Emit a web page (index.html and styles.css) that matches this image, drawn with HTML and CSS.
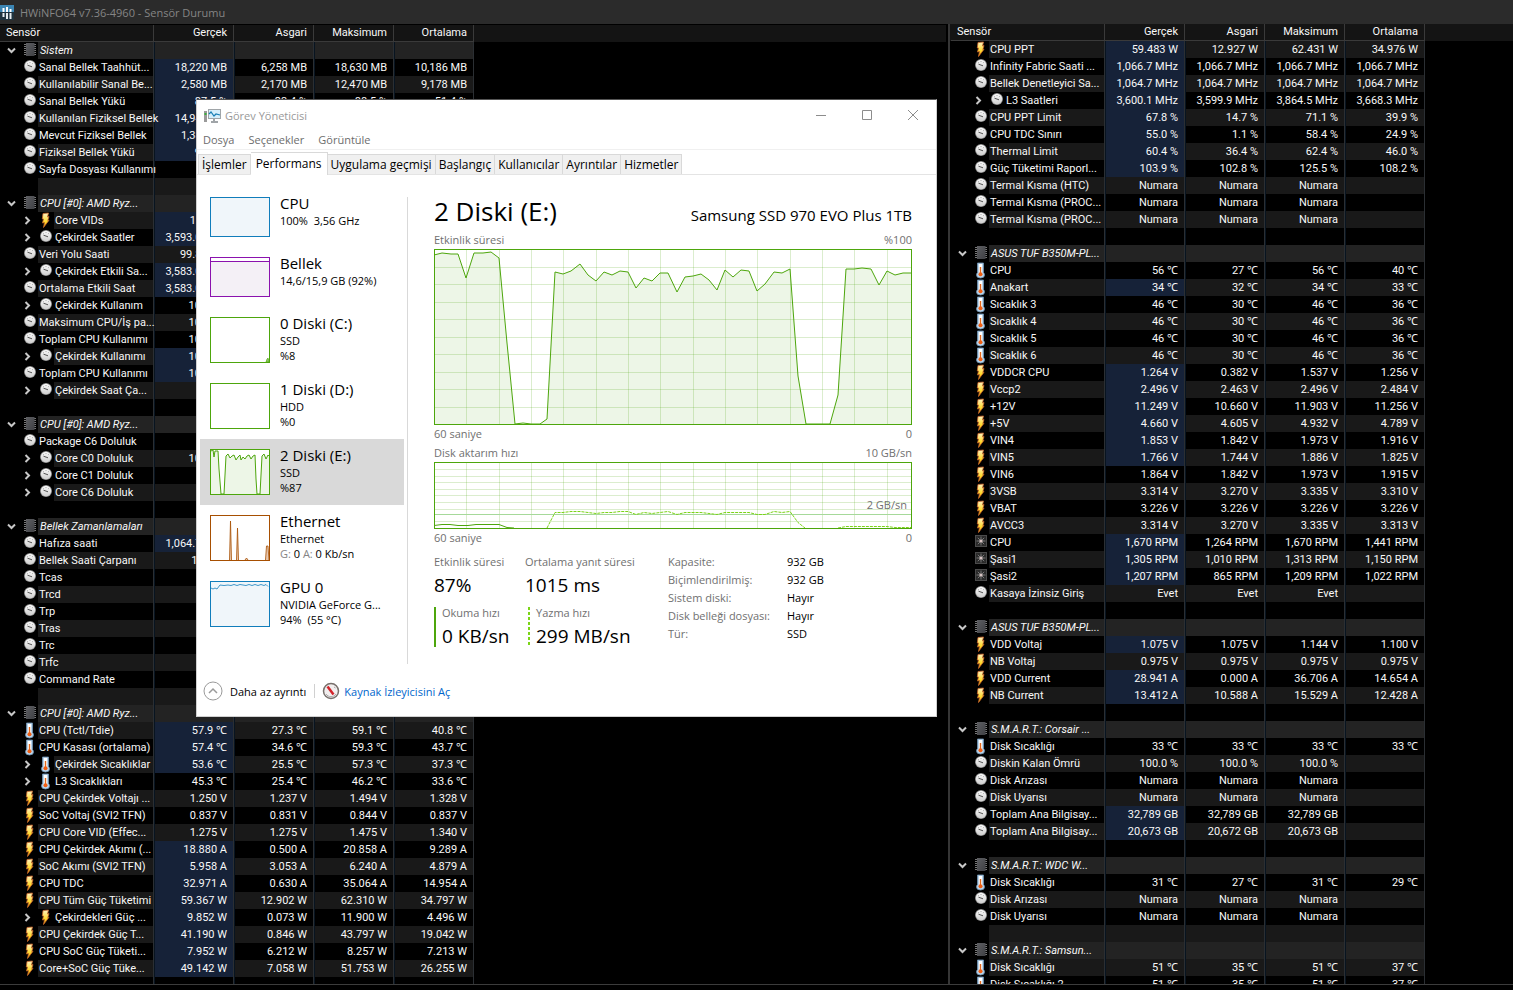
FILE: index.html
```html
<!DOCTYPE html>
<html lang="tr">
<head>
<meta charset="utf-8">
<title>HWiNFO64 v7.36-4960 - Sensör Durumu</title>
<link rel="stylesheet" href="styles.css">
</head>
<body>
<svg class="symbols" aria-hidden="true">
  <linearGradient id="metal" x1="0" y1="0" x2="0" y2="1"><stop offset="0" stop-color="#fafafa"/><stop offset="1" stop-color="#cfcfcf"/></linearGradient>
  <linearGradient id="flame" x1="0" y1="0" x2="0" y2="1"><stop offset="0" stop-color="#fff3c4"/><stop offset=".6" stop-color="#ffd92e"/><stop offset="1" stop-color="#f6a800"/></linearGradient>
  <linearGradient id="case" x1="0" y1="0" x2="1" y2="1"><stop offset="0" stop-color="#5e5f63"/><stop offset="1" stop-color="#3f4044"/></linearGradient>
  <symbol id="gauge" viewBox="0 0 16 17"><circle cx="8" cy="7" r="6" fill="#8b8b8b"/><circle cx="8" cy="7" r="5.200" fill="url(#metal)"/><path d="M5.500 6.200L10 7.800" stroke="#555" stroke-width="1"/><path d="M5 4.200l.8.6M11 4.200l-.8.6M8 3v1" stroke="#aaa"/></symbol>
  <symbol id="chip" viewBox="0 0 16 17"><path d="M2 2.500h12M2 4.500h12M2 6.500h12M2 8.500h12M2 10.500h12M2 12.500h12" stroke="#777"/><rect x="4" y="1" width="8.500" height="13" fill="url(#case)"/></symbol>
  <symbol id="bolt" viewBox="0 0 16 17"><path d="M5 1.500L10.500 1 9.500 5l1.500-.5-1.200 4 1.200-.2L5.500 15.500 6.500 10.500 4.500 11 5.500 7 4.300 7z" fill="url(#flame)" stroke="#c8662a" stroke-width=".8"/></symbol>
  <symbol id="therm" viewBox="0 0 16 17"><path d="M4.500 1h6v9.500q1 1 1 2.500 0 3-4 3t-4-3q0-1.500 1-2.500z" fill="#b9d4ea" stroke="#6f93b3" stroke-width=".8"/><path d="M6 2h3v9H6z" fill="#fff"/><path d="M7.500 5v7" stroke="#e2691c" stroke-width="1.400"/><circle cx="7.500" cy="12.300" r="2" fill="#f05f14"/></symbol>
  <symbol id="fan" viewBox="0 0 16 17"><rect x="2" y="1" width="12" height="12" fill="#4a4a4a"/><rect x="3" y="2" width="10" height="10" fill="#2a2a2a"/><path d="M8 2.500v9M3.500 7h9M4.800 3.800l6.400 6.400M11.200 3.800l-6.400 6.400" stroke="#777"/><circle cx="8" cy="7" r="1.600" fill="#d8c4c4"/></symbol>
</svg>

<div class="desktop">
  <header class="app-bar">
    <svg class="app-logo" viewBox="0 0 14 15"><rect width="14" height="7" fill="#3c86b4"/><rect y="7" width="14" height="8" fill="#20343f"/><path d="M3.500 3v4M7 2v5M10.500 4v3" stroke="#fff" stroke-width="2"/><path d="M3.500 8v4M7 8v6M10.500 8v6" stroke="#e8eef2" stroke-width="2"/></svg>
    <h1 class="app-title">HWiNFO64 v7.36-4960 - Sensör Durumu</h1>
  </header>
  <main class="panes">
    <section class="pane pane-left"><table class="sensors" id="left"></table></section>
    <section class="pane pane-right"><table class="sensors" id="right"></table></section>
  </main>
  <footer class="app-foot"></footer>
</div>

<div class="window" role="dialog" aria-label="Görev Yöneticisi">
  <div class="win-bar">
    <svg class="win-icon" viewBox="0 0 17 15"><path d="M1.500 3v11" stroke="#9a9a9a" stroke-width="3"/><path d="M1.500 5v2" stroke="#3cae3c" stroke-width="2"/><rect x="4.500" y="1.500" width="12" height="9" fill="#d6effb" stroke="#a0a5a8"/><path d="M5 6l2-2 3 4 2-2 4 1" fill="none" stroke="#1a7fb5" stroke-width="1.200"/><path d="M10 11v2M7 14h7" stroke="#a0a5a8" stroke-width="2"/></svg>
    <span class="win-title">Görev Yöneticisi</span>
    <div class="win-buttons">
      <button aria-label="Simge durumuna küçült"><svg viewBox="0 0 12 12"><path d="M1 6.500h10"/></svg></button>
      <button aria-label="Ekranı kapla"><svg viewBox="0 0 12 12"><path d="M1.500 1.500h9v9h-9z"/></svg></button>
      <button aria-label="Kapat"><svg viewBox="0 0 12 12"><path d="M1 1l10 10M11 1L1 11"/></svg></button>
    </div>
  </div>
  <nav class="menu"><button>Dosya</button><button>Seçenekler</button><button>Görüntüle</button></nav>
  <div class="tabs" role="tablist">
    <button role="tab" class="tab">İşlemler</button><button role="tab" class="tab active" aria-selected="true">Performans</button><button role="tab" class="tab">Uygulama geçmişi</button><button role="tab" class="tab">Başlangıç</button><button role="tab" class="tab">Kullanıcılar</button><button role="tab" class="tab">Ayrıntılar</button><button role="tab" class="tab">Hizmetler</button>
  </div>
  <div class="body">
    <aside class="devices">
      <button class="device">
        <svg class="thumb low" viewBox="0 0 60 40"><rect x=".5" y=".5" width="59" height="39" fill="#f0f6fa" stroke="#117dbb"/></svg>
        <span class="info"><span class="name">CPU</span><span>100%&nbsp; 3,56 GHz</span></span>
      </button>
      <button class="device">
        <svg class="thumb low" viewBox="0 0 60 40"><rect x=".5" y=".5" width="59" height="39" fill="#fff" stroke="#8b12ae"/><path d="M1 4.500h58v34.500H1z" fill="#f4f0f6"/><path d="M1 4.500h58" stroke="#8b12ae"/></svg>
        <span class="info"><span class="name">Bellek</span><span>14,6/15,9 GB (92%)</span></span>
      </button>
      <button class="device">
        <svg class="thumb" viewBox="0 0 60 46"><rect x=".5" y=".5" width="59" height="45" fill="#fff" stroke="#4da60c"/><path d="M56 45l1-3 1-1 1 3v1z" fill="#8cc665" stroke="#4da60c" stroke-width=".6"/></svg>
        <span class="info"><span class="name">0 Diski (C:)</span><span>SSD</span><span>%8</span></span>
      </button>
      <button class="device">
        <svg class="thumb" viewBox="0 0 60 46"><rect x=".5" y=".5" width="59" height="45" fill="#fff" stroke="#4da60c"/></svg>
        <span class="info"><span class="name">1 Diski (D:)</span><span>HDD</span><span>%0</span></span>
      </button>
      <button class="device selected">
        <svg class="thumb" viewBox="0 0 60 46"><rect x=".5" y=".5" width="59" height="45" fill="#fff" stroke="#4da60c"/><path d="M1 2L3 1 4 8 5 2 8 2 9 20 11 45H14L16 7 18 5 20 9 22 7 24 6 26 11 28 8 30 6 31 11 33 8 35 10 37 7 39 6 41 10 43 7 45 6 46 30 47 45H50L52 7 54 5 56 10 58 6 59 7V45H1z" fill="#edf6e7"/><path d="M1 2L3 1 4 8 5 2 8 2 9 20 11 45H14L16 7 18 5 20 9 22 7 24 6 26 11 28 8 30 6 31 11 33 8 35 10 37 7 39 6 41 10 43 7 45 6 46 30 47 45H50L52 7 54 5 56 10 58 6 59 7" fill="none" stroke="#4da60c"/></svg>
        <span class="info"><span class="name">2 Diski (E:)</span><span>SSD</span><span>%87</span></span>
      </button>
      <button class="device">
        <svg class="thumb" viewBox="0 0 60 46"><rect x=".5" y=".5" width="59" height="45" fill="#fff" stroke="#a74f01"/><path d="M19.500 45l1-39 1 39M26.500 45l1-32 1 32M35 45l1.500-2 1.500 2M55.500 45l1-14h1.500l1 14" fill="#e8c8b0" stroke="#a74f01" stroke-width=".8"/></svg>
        <span class="info"><span class="name">Ethernet</span><span>Ethernet</span><span><i>G:</i> 0 <i>A:</i> 0 Kb/sn</span></span>
      </button>
      <button class="device">
        <svg class="thumb" viewBox="0 0 60 46"><rect x=".5" y=".5" width="59" height="45" fill="#f0f6fa" stroke="#117dbb"/><path d="M1 7l2 1 2-1 2 1 3-4 4 .5 4-.5 3 .500 3-1 3 1 3-1 3 .500 3 .500 3-1 3 1 3-1 3 1 3-1 3 1 2-1 2 2" fill="none" stroke="#117dbb" stroke-width=".8"/></svg>
        <span class="info"><span class="name">GPU 0</span><span>NVIDIA GeForce G...</span><span>94%&nbsp; (55 °C)</span></span>
      </button>
    </aside>
    <section class="detail">
      <div class="headline"><h2>2 Diski (E:)</h2><span class="model">Samsung SSD 970 EVO Plus 1TB</span></div>
      <div class="caption"><span>Etkinlik süresi</span><span>%100</span></div>
      <svg class="chart" viewBox="0 0 478 176" preserveAspectRatio="none">
        <path class="area" d="M0 176V6L8 4 17 5H24L32 29 40 4H49L57 3 65 9 73 94 81 175 106 175 113 170 121 23 129 25 137 22 146 15 154 26 162 32 170 23 178 26 186 22 194 23 202 39 210 29 218 32 226 24H234L243 43 251 28 259 27 267 25 275 31 283 41 291 21 299 28 307 21 315 22 323 42 331 35 340 23 348 24 356 20 364 127 372 175H396L404 146 412 20H420L428 19 437 20 445 36 453 22 461 26 469 24H478V176z"/>
        <path class="grid" d="M32.500 0v176M65.500 0v176M97.500 0v176M129.500 0v176M162.500 0v176M194.500 0v176M226.500 0v176M259.500 0v176M291.500 0v176M323.500 0v176M356.500 0v176M388.500 0v176M420.500 0v176M453.500 0v176M0 18.500h478M0 35.500h478M0 53.500h478M0 70.500h478M0 88.500h478M0 105.500h478M0 123.500h478M0 140.500h478M0 158.500h478"/>
        <path class="line" d="M0 6L8 4 17 5H24L32 29 40 4H49L57 3 65 9 73 94 81 175 89 174 97 175H106L113 170 121 23 129 25 137 22 146 15 154 26 162 32 170 23 178 26 186 22 194 23 202 39 210 29 218 32 226 24H234L243 43 251 28 259 27 267 25 275 31 283 41 291 21 299 28 307 21 315 22 323 42 331 35 340 23 348 24 356 20 364 127 372 175H396L404 146 412 20H420L428 19 437 20 445 36 453 22 461 26 469 24H478"/>
        <rect class="frame" x=".5" y=".5" width="477" height="175"/>
      </svg>
      <div class="caption under"><span>60 saniye</span><span>0</span></div>
      <div class="caption"><span>Disk aktarım hızı</span><span>10 GB/sn</span></div>
      <div class="rate">
        <svg class="chart" viewBox="0 0 478 67" preserveAspectRatio="none">
          <path class="grid" d="M32.500 0v67M65.500 0v67M97.500 0v67M129.500 0v67M162.500 0v67M194.500 0v67M226.500 0v67M259.500 0v67M291.500 0v67M323.500 0v67M356.500 0v67M388.500 0v67M420.500 0v67M453.500 0v67M0 7.500h478M0 14.500h478M0 20.500h478M0 27.500h478M0 33.500h478M0 40.500h478M0 47.500h478M0 59.500h478"/>
          <path class="limit" d="M0 52.500h478"/>
          <path class="line" d="M0 63.500L8 62.500H16L24 63.500H34L42 62.500H65L73 65.500 80 66"/>
          <path class="line write" d="M113 66L121 50.500H129L137 49.500H146L154 50.500 162 51.500 170 50.500H178L186 49.500H194L202 52.500 210 50.500 218 51.500 226 50.500 234 49.500 243 52.500 251 50.500H267L283 52.500 291 50.500H315L323 52.500H331L340 49.500 348 50.500 356 49.500 364 60.500 371 66M404 66L412 64.500H453L461 65.500H477"/>
          <rect class="frame" x=".5" y=".5" width="477" height="66"/>
        </svg>
        <span class="limit-label">2 GB/sn</span>
      </div>
      <div class="caption under"><span>60 saniye</span><span>0</span></div>
      <div class="stats">
        <div class="figures">
          <div class="figure"><span>Etkinlik süresi</span><b>87%</b></div>
          <div class="figure"><span>Ortalama yanıt süresi</span><b>1015 ms</b></div>
          <div class="figure keyed read"><span>Okuma hızı</span><b>0 KB/sn</b></div>
          <div class="figure keyed written"><svg class="dots" viewBox="0 0 2 40"><path d="M1 0v40"/></svg><span>Yazma hızı</span><b>299 MB/sn</b></div>
        </div>
        <dl class="facts">
          <dt>Kapasite:</dt><dd>932 GB</dd>
          <dt>Biçimlendirilmiş:</dt><dd>932 GB</dd>
          <dt>Sistem diski:</dt><dd>Hayır</dd>
          <dt>Disk belleği dosyası:</dt><dd>Hayır</dd>
          <dt>Tür:</dt><dd>SSD</dd>
        </dl>
      </div>
    </section>
  </div>
  <div class="win-foot">
    <button class="less"><svg viewBox="0 0 20 20"><circle cx="10" cy="10" r="9" fill="none" stroke="#9a9a9a"/><path d="M6 12l4-4 4 4" fill="none" stroke="#9a9a9a" stroke-width="1.500"/></svg>Daha az ayrıntı</button>
    <a class="monitor" href="#"><svg viewBox="0 0 18 18"><circle cx="9" cy="9" r="7.500" fill="#f2eeee" stroke="#77706c" stroke-width="1.500"/><path d="M5.500 4.500l6 8" stroke="#d2232a" stroke-width="2.500"/><path d="M4 12a6 6 0 0 0 10 0M12 5l1.500 1" fill="none" stroke="#aaa"/></svg>Kaynak İzleyicisini Aç</a>
  </div>
</div>
<script src="script.js"></script>
</body>
</html>
```
FILE: styles.css
```css
* { box-sizing: border-box; }
body { margin: 0; background: #000; font-family: "Open Sans", sans-serif; font-size: 11px; overflow: hidden; }
button { font: inherit; color: inherit; background: none; border: 0; padding: 0; text-align: left; }
.symbols { position: absolute; width: 0; height: 0; }

/* sensor application */
.desktop { display: flex; flex-direction: column; height: 100vh; }
.app-bar { display: flex; align-items: center; gap: 6px; height: 24px; flex: none; background: #2b2b2b; }
.app-logo { width: 14px; height: 15px; }
.app-title { margin: 0; font-size: 11px; font-weight: 400; color: #858585; }
.panes { flex: 1; min-height: 0; display: grid; grid-template-columns: 948fr 565fr; }
.pane { min-width: 0; overflow: hidden; background: linear-gradient(#141414, #141414) 0 0 / 100% 17px no-repeat #000; }
.pane-left { border-top: 1px solid #000; border-right: 2px solid #000; }
.pane-right { border-left: 2px solid #363636; padding-left: 1px; }
.app-foot { height: 6px; flex: none; border-top: 1px solid #3c3c3c; background: #000; }

.sensors { width: 474px; table-layout: fixed; border-collapse: separate; border-spacing: 0; font-family: Roboto, sans-serif; font-size: 11px; line-height: 16px; color: #f8f8f8; }
.sensors col { width: 80px; }
.sensors .col-name { width: 154px; }
.sensors th { height: 17px; padding: 0 6px; font-weight: 400; text-align: right; background: #141414; border-right: 1px solid #3a3a3a; border-bottom: 1px solid #3a3a3a; }
.sensors th:first-child { text-align: left; }
.sensors td { height: 17px; padding: 1px 6px 0 0; text-align: right; white-space: nowrap; border-left: 1px solid #081420; border-right: 1px solid #2b2f33; }
.sensors .name { padding: 0; border-left: 0; }
.sensors .even td, .even .label { background: #191919; }
.sensors .group td, .group .label { background: #232323; }
.sensors .even .name, .sensors .group .name { background: none; }
.sensors td.hot { background: #162238; }
.tree { display: flex; height: 17px; padding-left: 22px; }
.group .tree { padding-left: 0; }
.twist { width: 22px; display: grid; place-items: center; }
.sub .twist { width: 16px; padding-right: 5px; }
.twist svg { width: 9px; height: 9px; fill: none; stroke: #c8c8c8; stroke-width: 2; }
.kind { width: 16px; height: 17px; flex: none; }
.label { flex: 1; min-width: 0; padding: 1px 0 0 1px; text-align: left; }
.group .label { font-style: italic; padding-left: 2px; }
.spacer { width: 16px; }

/* task manager window */
.window { position: absolute; left: 196px; top: 99px; width: 741px; background: #fff; border: 1px solid #d0d0d0; border-top-color: #555; display: flex; flex-direction: column; color: #000; }
.win-bar { display: flex; align-items: center; height: 30px; padding-left: 7px; color: #999; }
.win-icon { width: 17px; height: 15px; margin-right: 4px; }
.win-buttons { margin-left: auto; display: flex; }
.win-buttons button { width: 46px; height: 29px; display: grid; place-items: center; }
.win-buttons svg { width: 12px; height: 12px; fill: none; stroke: #8c8c8c; }
.menu { display: flex; gap: 14px; height: 20px; padding-left: 6px; color: #6d6d6d; border-bottom: 1px solid #f0f0f0; }
.tabs { display: flex; align-items: flex-end; height: 25px; padding-left: 1px; font-size: 12px; border-bottom: 1px solid #e4e4e4; }
.tab { height: 20px; padding: 0 3px; background: #f0f0f0; border: 1px solid #d9d9d9; border-left: 0; border-bottom: 0; text-align: center; }
.tab:first-child { border-left: 1px solid #d9d9d9; }
.tab.active { height: 23px; margin-bottom: -1px; padding: 0 5px 2px; background: #fff; }
.body { display: flex; padding: 12px 24px 8px 3px; }
.devices { width: 204px; display: flex; flex-direction: column; }
.device { display: flex; gap: 10px; padding: 10px; }
.selected { background: #d9d9d9; }
.thumb { width: 60px; height: 46px; }
.thumb.low { height: 40px; }
.info { display: flex; flex-direction: column; margin-top: -4px; height: 46px; line-height: 15px; white-space: nowrap; }
.low + .info { height: 40px; }
.info .name { font-size: 15px; line-height: 20px; }
.info i { font-style: normal; color: #858585; }
.detail { flex: 1; margin: 10px 0 0 3px; padding-left: 26px; border-left: 1px solid #d9d9d9; height: 467px; }
.headline { display: flex; justify-content: space-between; align-items: baseline; height: 33px; }
.headline h2 { margin: 0; font-size: 26px; line-height: 28px; font-weight: 400; }
.model { font-size: 15px; }
.caption { display: flex; justify-content: space-between; height: 19px; line-height: 19px; color: #707070; }
.under { height: 18px; line-height: 18px; }
.chart { display: block; width: 100%; height: 176px; }
.rate { position: relative; }
.rate .chart { height: 67px; }
.limit-label { position: absolute; right: 5px; top: 35px; line-height: 16px; color: #707070; }
.area { fill: #edf6e7; }
.grid { fill: none; stroke: #4da60c; stroke-opacity: .2; }
.line { fill: none; stroke: #4da60c; }
.write { stroke: #7bd418; stroke-dasharray: 3 1; }
.limit { stroke: #a6d99a; }
.frame { fill: none; stroke: #4da60c; }
.stats { display: flex; margin-top: 6px; }
.figures { width: 234px; display: grid; grid-template-columns: 91px 1fr; row-gap: 8px; }
.figure { display: flex; flex-direction: column; color: #707070; line-height: 18px; white-space: nowrap; }
.figure b { font-weight: 400; font-size: 19px; line-height: 28px; color: #000; }
.keyed { height: 40px; padding-left: 6px; border-left: 2px solid #4da60c; line-height: 12px; }
.written { position: relative; margin-left: 3px; border-left-color: transparent; }
.dots { position: absolute; left: -2px; top: 0; width: 2px; height: 40px; stroke: #7bd418; stroke-width: 2; stroke-dasharray: 3 2; }
.keyed b { line-height: 34px; }
.facts { margin: 0; display: grid; grid-template-columns: 119px 1fr; grid-auto-rows: 18px; line-height: 18px; color: #707070; }
.facts dd { margin: 0; color: #000; }
.win-foot { display: flex; align-items: center; height: 44px; padding: 0 0 6px 6px; }
.less, .monitor { display: flex; align-items: center; gap: 7px; }
.less { padding-right: 8px; border-right: 1px solid #d0d0d0; height: 14px; }
.less svg { width: 20px; height: 20px; }
.monitor { padding-left: 7px; gap: 4px; color: #0066cc; text-decoration: none; }
.monitor svg { width: 18px; height: 18px; }
```
FILE: script.js
```js
// One sensor per line: kind|name|current|min|max|average
// Kinds: G group, g gauge, b bolt, t thermometer, f fan. "+" = expandable child, "*" = highlighted value.
const LEFT = `G|Sistem
g*|Sanal Bellek Taahhüt...|18,220 MB|6,258 MB|18,630 MB|10,186 MB
g*|Kullanılabilir Sanal Be...|2,580 MB|2,170 MB|12,470 MB|9,178 MB
g*|Sanal Bellek Yükü|87.5 %|33.4 %|88.5 %|51.4 %
g*|Kullanılan Fiziksel Bellek|14,944 MB
g*|Mevcut Fiziksel Bellek|1,384 MB
g*|Fiziksel Bellek Yükü|92.5 %
g|Sayfa Dosyası Kullanımı

G|CPU [#0]: AMD Ryz...
b+*|Core VIDs|1.275 V
g+*|Çekirdek Saatler|3,593.0 MHz
g|Veri Yolu Saati|99.8 MHz
g+*|Çekirdek Etkili Sa...|3,583.0 MHz
g*|Ortalama Etkili Saat|3,583.0 MHz
g+|Çekirdek Kullanım|100.0 %
g|Maksimum CPU/İş pa...|100.0 %
g|Toplam CPU Kullanımı|100.0 %
g+*|Çekirdek Kullanımı|100.0 %
g*|Toplam CPU Kullanımı|100.0 %
g+|Çekirdek Saat Ça...

G|CPU [#0]: AMD Ryz...
g|Package C6 Doluluk
g+|Core C0 Doluluk|100.0 %
g+|Core C1 Doluluk
g+|Core C6 Doluluk

G|Bellek Zamanlamaları
g*|Hafıza saati|1,064.7 MHz
g|Bellek Saati Çarpanı|10.67 x
g|Tcas
g|Trcd
g|Trp
g|Tras
g|Trc
g|Trfc
g|Command Rate

G|CPU [#0]: AMD Ryz...
t*|CPU (Tctl/Tdie)|57.9 ℃|27.3 ℃|59.1 ℃|40.8 ℃
t*|CPU Kasası (ortalama)|57.4 ℃|34.6 ℃|59.3 ℃|43.7 ℃
t+*|Çekirdek Sıcaklıklar|53.6 ℃|25.5 ℃|57.3 ℃|37.3 ℃
t+|L3 Sıcaklıkları|45.3 ℃|25.4 ℃|46.2 ℃|33.6 ℃
b|CPU Çekirdek Voltajı ...|1.250 V|1.237 V|1.494 V|1.328 V
b|SoC Voltaj (SVI2 TFN)|0.837 V|0.831 V|0.844 V|0.837 V
b|CPU Core VID (Effec...|1.275 V|1.275 V|1.475 V|1.340 V
b*|CPU Çekirdek Akımı (...|18.880 A|0.500 A|20.858 A|9.289 A
b*|SoC Akımı (SVI2 TFN)|5.958 A|3.053 A|6.240 A|4.879 A
b*|CPU TDC|32.971 A|0.630 A|35.064 A|14.954 A
b*|CPU Tüm Güç Tüketimi|59.367 W|12.902 W|62.310 W|34.797 W
b+*|Çekirdekleri Güç ...|9.852 W|0.073 W|11.900 W|4.496 W
b*|CPU Çekirdek Güç T...|41.190 W|0.846 W|43.797 W|19.042 W
b*|CPU SoC Güç Tüketi...|7.952 W|6.212 W|8.257 W|7.213 W
b*|Core+SoC Güç Tüke...|49.142 W|7.058 W|51.753 W|26.255 W
`;

const RIGHT = `b*|CPU PPT|59.483 W|12.927 W|62.431 W|34.976 W
g*|Infinity Fabric Saati ...|1,066.7 MHz|1,066.7 MHz|1,066.7 MHz|1,066.7 MHz
g*|Bellek Denetleyici Sa...|1,064.7 MHz|1,064.7 MHz|1,064.7 MHz|1,064.7 MHz
g+*|L3 Saatleri|3,600.1 MHz|3,599.9 MHz|3,864.5 MHz|3,668.3 MHz
g*|CPU PPT Limit|67.8 %|14.7 %|71.1 %|39.9 %
g*|CPU TDC Sınırı|55.0 %|1.1 %|58.4 %|24.9 %
g*|Thermal Limit|60.4 %|36.4 %|62.4 %|46.0 %
g*|Güç Tüketimi Raporl...|103.9 %|102.8 %|125.5 %|108.2 %
g|Termal Kısma (HTC)|Numara|Numara|Numara
g|Termal Kısma (PROC...|Numara|Numara|Numara
g|Termal Kısma (PROC...|Numara|Numara|Numara

G|ASUS TUF B350M-PL...
t|CPU|56 ℃|27 ℃|56 ℃|40 ℃
t*|Anakart|34 ℃|32 ℃|34 ℃|33 ℃
t|Sıcaklık 3|46 ℃|30 ℃|46 ℃|36 ℃
t|Sıcaklık 4|46 ℃|30 ℃|46 ℃|36 ℃
t|Sıcaklık 5|46 ℃|30 ℃|46 ℃|36 ℃
t|Sıcaklık 6|46 ℃|30 ℃|46 ℃|36 ℃
b*|VDDCR CPU|1.264 V|0.382 V|1.537 V|1.256 V
b*|Vccp2|2.496 V|2.463 V|2.496 V|2.484 V
b*|+12V|11.249 V|10.660 V|11.903 V|11.256 V
b*|+5V|4.660 V|4.605 V|4.932 V|4.789 V
b*|VIN4|1.853 V|1.842 V|1.973 V|1.916 V
b*|VIN5|1.766 V|1.744 V|1.886 V|1.825 V
b|VIN6|1.864 V|1.842 V|1.973 V|1.915 V
b|3VSB|3.314 V|3.270 V|3.335 V|3.310 V
b|VBAT|3.226 V|3.226 V|3.226 V|3.226 V
b|AVCC3|3.314 V|3.270 V|3.335 V|3.313 V
f*|CPU|1,670 RPM|1,264 RPM|1,670 RPM|1,441 RPM
f*|Şasi1|1,305 RPM|1,010 RPM|1,313 RPM|1,150 RPM
f*|Şasi2|1,207 RPM|865 RPM|1,209 RPM|1,022 RPM
g|Kasaya İzinsiz Giriş|Evet|Evet|Evet

G|ASUS TUF B350M-PL...
b*|VDD Voltaj|1.075 V|1.075 V|1.144 V|1.100 V
b|NB Voltaj|0.975 V|0.975 V|0.975 V|0.975 V
b*|VDD Current|28.941 A|0.000 A|36.706 A|14.654 A
b*|NB Current|13.412 A|10.588 A|15.529 A|12.428 A

G|S.M.A.R.T.: Corsair ...
t|Disk Sıcaklığı|33 ℃|33 ℃|33 ℃|33 ℃
g|Diskin Kalan Ömrü|100.0 %|100.0 %|100.0 %
g|Disk Arızası|Numara|Numara|Numara
g|Disk Uyarısı|Numara|Numara|Numara
g*|Toplam Ana Bilgisay...|32,789 GB|32,789 GB|32,789 GB
g*|Toplam Ana Bilgisay...|20,673 GB|20,672 GB|20,673 GB

G|S.M.A.R.T.: WDC W...
t|Disk Sıcaklığı|31 ℃|27 ℃|31 ℃|29 ℃
g|Disk Arızası|Numara|Numara|Numara
g|Disk Uyarısı|Numara|Numara|Numara

G|S.M.A.R.T.: Samsun...
t|Disk Sıcaklığı|51 ℃|35 ℃|51 ℃|37 ℃
t|Disk Sıcaklığı 2|51 ℃|35 ℃|51 ℃|37 ℃`;

const ICONS = { G: "chip", g: "gauge", b: "bolt", t: "therm", f: "fan" };
const OPEN = '<button class="twist" aria-label="Daralt"><svg viewBox="0 0 9 9"><path d="M1 2.500l3.500 3.500 3.500-3.500"/></svg></button>';
const CLOSED = '<button class="twist" aria-label="Genişlet"><svg viewBox="0 0 9 9"><path d="M2.500 1l3.500 3.500-3.500 3.500"/></svg></button>';

function row(line, index) {
  const [kind, name = "", ...values] = line.split("|");
  const group = kind[0] === "G";
  const sub = kind.includes("+");
  const classes = [index % 2 === 0 && "even", group && "group", sub && "sub"].filter(Boolean).join(" ");
  const twist = group ? OPEN : sub ? CLOSED : "";
  const icon = kind ? `<svg class="kind"><use href="#${ICONS[kind[0]]}"/></svg>` : '<span class="spacer"></span>';
  const cells = [0, 1, 2, 3].map(i =>
    `<td${i === 0 && kind.includes("*") ? ' class="hot"' : ""}>${values[i] || ""}</td>`).join("");
  return `<tr class="${classes}"><td class="name"><div class="tree">${twist}${icon}<span class="label">${name}</span></div></td>${cells}</tr>`;
}

function fill(id, data) {
  document.getElementById(id).innerHTML =
    '<colgroup><col class="col-name"><col><col><col><col></colgroup>' +
    "<thead><tr><th>Sensör</th><th>Gerçek</th><th>Asgari</th><th>Maksimum</th><th>Ortalama</th></tr></thead>" +
    `<tbody>${data.split("\n").map(row).join("")}</tbody>`;
}

fill("left", LEFT);
fill("right", RIGHT);
```
